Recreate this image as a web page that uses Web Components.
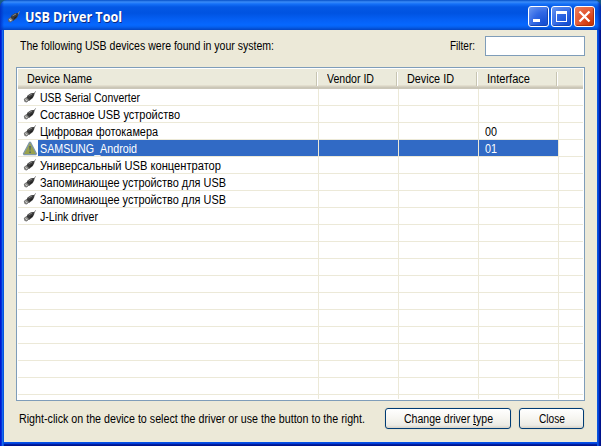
<!DOCTYPE html>
<html lang="en"><head><meta charset="utf-8"><title>USB Driver Tool</title>
<style>html,body{margin:0;width:601px;height:446px;overflow:hidden;background:#175a86;font:12px "Liberation Sans",sans-serif;color:#000}</style>
</head><body><usb-window></usb-window>
<script>
class Base extends HTMLElement{
  connectedCallback(){ if(!this.shadowRoot) this.attachShadow({mode:'open'}); this.shadowRoot.innerHTML=this.render(); this.ready&&this.ready(); }
}
// Label condensed horizontally to a given width
class FitText extends Base{
  render(){return `<style>:host{display:block;flex:none;height:15px;line-height:15px;white-space:nowrap;width:${this.getAttribute('w')}px}span{display:inline-block;transform-origin:0 0}u{text-underline-offset:1px;text-decoration-thickness:1px}</style><span>${this.getAttribute('t')}</span>`}
  ready(){const s=this.shadowRoot.querySelector('span'),t=this.getAttribute('t'),k=+this.getAttribute('key')||0;
    if(k) s.innerHTML=t.slice(0,k)+'<u>'+t[k]+'</u>'+t.slice(k+1);
    s.style.transform=`scaleX(${this.getAttribute('w')/s.getBoundingClientRect().width})`;}
}
customElements.define('fit-text',FitText);
class UsbIcon extends Base{
  render(){return `<style>:host{display:block;flex:none;width:16px;height:14px}svg{display:block}</style>
  <svg width="16" height="14" viewBox="0 0 16 14"><path d="M11 4.500L12.500 4V2.500L14 1.500" fill="none" stroke="#8a8a8a" stroke-width="1"/>
  <path d="M5.500 5.500L9 3.300L12 3L12.300 5L10.800 8L7 11L4.500 8Z" fill="#3a3a3a"/><path d="M6.500 5.800L10 4" stroke="#8a8a8a"/><path d="M8 8.500L10.500 6.500" stroke="#151515"/>
  <path d="M2.300 9L4.600 7.500L7 10L4.800 12L2.800 11.600Z" fill="#8c8c88" stroke="#5a5a5a" stroke-width=".7"/><path d="M3.500 9.300L5.200 11" stroke="#ddd"/></svg>`}
}
customElements.define('usb-icon',UsbIcon);
class WarnIcon extends Base{
  render(){return `<style>:host{display:block;flex:none;width:16px;height:15px}svg{display:block}</style>
  <svg width="16" height="15" viewBox="0 0 16 15"><path d="M7.500 1.500H8.500L14.400 12.800L13.800 13.600H2L1.500 12.800Z" fill="#99a24c" stroke="#8097a6" stroke-width="1.300"/><path d="M7.200 5H8.800L8.400 9.500H7.600Z" fill="#4a6070"/><path d="M7.300 10.500h1.500v1.500H7.300z" fill="#4a6070"/></svg>`}
}
customElements.define('warn-icon',WarnIcon);
class CaptionButton extends Base{
  render(){const k=this.getAttribute('kind'),c=k==='close';
  const g={min:'<path d="M5 13h7v3H5z" fill="#fff"/>',max:'<path d="M5 5h11v11H5zM6 8v7h9V8z" fill="#fff" fill-rule="evenodd"/>',close:'<path d="M5.500 5.500L15.500 15.500M15.500 5.500L5.500 15.500" stroke="#fff" stroke-width="2.300"/>'}[k];
  return `<style>:host{display:block;box-sizing:border-box;width:21px;height:21px;border:1px solid #fff;border-radius:3px;background:${c?'radial-gradient(circle at 80% 85%,#cc3505 0,#e2522b 45%,#ea8262 100%)':'radial-gradient(circle at 80% 85%,#154fd4 0,#3168e5 50%,#6f9bf2 100%)'};box-shadow:inset -1px -1px 1px ${c?'#a8300b':'#1545b4'}}svg{display:block;margin:-1px}</style><svg width="21" height="21">${g}</svg>`}
}
customElements.define('caption-button',CaptionButton);
class TitleBar extends Base{
  render(){return `<style>:host{display:flex;box-sizing:border-box;height:30px;padding:6px 6px 0 6px;border-radius:7px 7px 0 0;background:linear-gradient(90deg,#0033c8 0,transparent 4px,transparent 597px,#0025a8 601px),linear-gradient(#0550c8 0,#3a8cf8 2px,#1470f8 4px,#0458e4 7px,#0053e1 13px,#0560f5 20px,#0668ff 25px,#0560ee 27px,#0344c2 30px)}
  usb-icon{margin-top:4px}fit-text{margin:2px auto 0 3px;font:bold 13.500px "Open Sans","Noto Sans",sans-serif;color:#fff;text-shadow:1px 1px #0a2a80}div{display:flex;gap:2px}</style>
  <usb-icon></usb-icon><fit-text t="USB Driver Tool" w="97"></fit-text><div><caption-button kind="min"></caption-button><caption-button kind="max"></caption-button><caption-button kind="close"></caption-button></div>`}
}
customElements.define('title-bar',TitleBar);
class DeviceRow extends Base{
  render(){const s=this.hasAttribute('selected');
  return `<style>:host{display:grid;grid-template-columns:300px 80px 80px 80px 1fr;height:17px;box-sizing:border-box;border-bottom:1px solid #ece9d8;${s?'color:#fff;':''}}
  .c{border-right:1px solid #ece9d8;display:flex;box-sizing:content-box;min-width:0;width:79px}.n{width:300px}.v{padding-left:6px;width:73px}.s{${s?'background:#316ac5':''}}.n .s{flex:1;padding-left:2px}usb-icon,warn-icon{margin:1px 0 0 4px}fit-text{margin-top:2px;height:14px}</style>
  <div class="c n">${this.hasAttribute('t')?(s?'<warn-icon></warn-icon>':'<usb-icon></usb-icon>')+`<div class="s"><fit-text t="${this.getAttribute('t')}" w="${this.getAttribute('w')}"></fit-text></div>`:''}</div>
  <div class="c s" style="margin-left:1px"></div><div class="c s" style="margin-left:1px"></div><div class="c v s" style="margin-left:1px">${this.hasAttribute('i')?`<fit-text t="${this.getAttribute('i')}" w="12"></fit-text>`:''}</div><div></div>`}
}
customElements.define('device-row',DeviceRow);
class ListHeader extends Base{
  render(){return `<style>:host{display:grid;grid-template-columns:300px 80px 80px 80px 1fr;height:20px;box-sizing:border-box;border-bottom:1px solid #cbc7b8;background:linear-gradient(#ebeadb 0 16px,#e2dece 16px 17px,#d6d2c2 17px 18px,#cbc7b8 18px)}
  div{position:relative;padding:3px 0 0 9px}div:not(:last-child)::after{content:"";position:absolute;right:0;top:3px;width:1px;height:14px;background:#c7c5b2;border-right:1px solid #fff}</style>
  <div><fit-text t="Device Name" w="65"></fit-text></div><div><fit-text t="Vendor ID" w="47"></fit-text></div><div><fit-text t="Device ID" w="47"></fit-text></div><div><fit-text t="Interface" w="43"></fit-text></div><div></div>`}
}
customElements.define('list-header',ListHeader);
class DeviceList extends Base{
  render(){const rows=[['USB Serial Converter',100],['Составное USB устройство',140],['Цифровая фотокамера',118,'00'],['SAMSUNG_Android',97,'01'],['Универсальный USB концентратор',181],['Запоминающее устройство для USB',186],['Запоминающее устройство для USB',186],['J-Link driver',58]];
  return `<style>:host{display:block;box-sizing:border-box;width:569px;height:334px;border:1px solid #7f9db9;padding:1px;background:#fff;overflow:hidden}.tail{height:4px;display:grid;grid-template-columns:301px 80px 80px 80px 1fr}.tail i:not(:last-child){border-right:1px solid #ece9d8}</style><list-header></list-header>`
  +rows.map(r=>`<device-row t="${r[0]}" w="${r[1]}" ${r[2]?`i="${r[2]}"`:''} ${r[2]==='01'?'selected':''}></device-row>`).join('')+'<device-row></device-row>'.repeat(10)+'<div class="tail"><i></i><i></i><i></i><i></i><i></i></div>'}
}
customElements.define('device-list',DeviceList);
class XpButton extends Base{
  render(){return `<style>:host{display:flex;justify-content:center;box-sizing:border-box;height:21px;border:1px solid #003c74;border-radius:3px;padding-top:3px;background:linear-gradient(#fff 0,#f6f5f0 50%,#ecebe5 85%,#d8d2c6 100%);box-shadow:0 0 0 1px #e4e1d0}</style><slot></slot>`}
}
customElements.define('xp-button',XpButton);
class UsbWindow extends Base{
  render(){return `<style>:host{display:flex;flex-direction:column;width:601px;height:446px}
  .client{flex:1;box-sizing:border-box;padding:0 12px;background:#ece9d8}
  .frame{flex:1;display:flex;box-sizing:border-box;background:linear-gradient(90deg,#0019cf 0 1px,#0831d9 1px 2px,#166aee 2px 3px,#0855dd 3px 4px,transparent 4px 597px,#0855dd 597px 598px,#0441d8 598px 599px,#001ea0 599px 600px,#00138c 600px),linear-gradient(#0855dd 0 412px,#0450e8 412px 413px,#0441d8 413px 414px,#001ea0 414px 415px,#00138c 415px);padding:0 4px 4px}
  .top{height:37px;display:flex;padding:0 0 0 4px;box-sizing:border-box}.top fit-text{margin-top:9px}.filter{margin-left:auto}
  input{appearance:none;box-sizing:border-box;width:100px;height:20px;margin:6px 0 0 10px;border:1px solid #7f9db9;background:#fff;padding:1px 4px;border-radius:0;outline:0}
  .bottom{display:flex;padding:7px 1px 0 3px}.bottom>fit-text{margin:4px auto 0 0}</style>
  <title-bar></title-bar><div class="frame"><div class="client">
  <div class="top"><fit-text t="The following USB devices were found in your system:" w="254"></fit-text><fit-text class="filter" t="Filter:" w="25"></fit-text><input aria-label="Filter"></div>
  <device-list></device-list>
  <div class="bottom"><fit-text t="Right-click on the device to select the driver or use the button to the right." w="346"></fit-text><xp-button style="width:126px"><fit-text t="Change driver type" key="14" w="89"></fit-text></xp-button><xp-button style="width:65px;margin-left:8px"><fit-text t="Close" w="26"></fit-text></xp-button></div>
  </div></div>`}
}
customElements.define('usb-window',UsbWindow);
</script></body></html>
